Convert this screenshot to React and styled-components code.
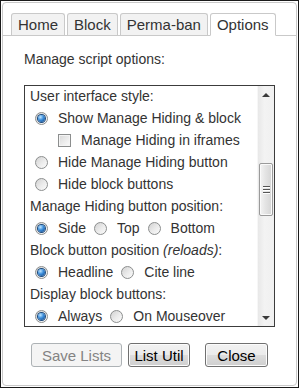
import React from 'react'
import styled, { createGlobalStyle } from 'styled-components'

const GlobalStyle = createGlobalStyle`
  html, body {
    margin: 0;
    padding: 0;
    background: #fff;
  }
  body {
    font-family: "Liberation Sans", Arial, sans-serif;
    font-size: 14px;
    color: #333;
  }
  * {
    box-sizing: border-box;
  }
`

const Frame = styled.div`
  width: 299px;
  height: 388px;
  border: 1px solid #1a1a1a;
  padding: 1px;
  background: #fff;
`

const Panel = styled.div`
  height: 100%;
  border: 1px solid #c9c9c9;
  border-radius: 4px;
  display: flex;
  flex-direction: column;
`

const TabBar = styled.ul`
  list-style: none;
  margin: 0;
  padding: 10px 8px 0;
  display: flex;
  align-items: flex-end;
  gap: 2px;
  border-bottom: 1px solid #c9c9c9;
`

const Tab = styled.li`
  height: ${({ $active }) => ($active ? '23px' : '22px')};
  margin-bottom: ${({ $active }) => ($active ? '-1px' : '0')};
  line-height: 21px;
  padding: 0 6px;
  font-size: 15px;
  border: 1px solid #c9c9c9;
  border-bottom: ${({ $active }) => ($active ? '1px solid #fff' : 'none')};
  border-radius: 3px 3px 0 0;
  background: ${({ $active }) => ($active ? '#fff' : '#f2f2f2')};
  color: #333;
  cursor: pointer;
`

const Body = styled.div`
  padding: 15px 21px 0;
  display: flex;
  flex-direction: column;
`

const Intro = styled.p`
  margin: 0 0 17px;
  line-height: 17px;
`

const ScrollBox = styled.div`
  width: 251px;
  height: 242px;
  border: 1px solid #3c3c3c;
  display: flex;
`

const ScrollContent = styled.div`
  flex: 1;
  overflow: hidden;
  padding: 0 0 0 5px;

  /* list is scrolled a pixel down */
  & > :first-child {
    margin-top: -1px;
  }
`

const Heading = styled.div`
  line-height: 22px;
  white-space: nowrap;
  em {
    font-style: italic;
  }
`

const Row = styled.div`
  display: flex;
  align-items: center;
  height: 22px;
  padding-left: ${({ $indent }) => $indent || 5}px;
  white-space: nowrap;
`

const Choice = styled.label`
  display: inline-flex;
  align-items: center;
  margin-right: ${({ $gap }) => $gap || 0}px;
`

const RadioDot = styled.span`
  width: 13px;
  height: 13px;
  border-radius: 50%;
  border: 1px solid #8c8e8e;
  background: linear-gradient(135deg, #d2d2d2 0%, #ececec 55%, #fbfbfb 100%);
  margin-right: 10px;
  display: flex;
  align-items: center;
  justify-content: center;
  flex-shrink: 0;

  &::after {
    content: '';
    display: ${({ $checked }) => ($checked ? 'block' : 'none')};
    width: 7px;
    height: 7px;
    border-radius: 50%;
    background: radial-gradient(circle at 35% 30%, #bfe6ff 0%, #3b8ddb 45%, #0f3f7a 100%);
    box-shadow: 0 0 0 1px #1b4a7d;
  }
`

const CheckBox = styled.span`
  width: 13px;
  height: 13px;
  border: 1px solid #8c8e8e;
  box-shadow: inset 0 0 0 1px #f4f4f4;
  background: linear-gradient(135deg, #d8d8d8 0%, #eeeeee 60%, #fafafa 100%);
  margin-right: 10px;
  flex-shrink: 0;
`

const ScrollBar = styled.div`
  width: 17px;
  display: flex;
  flex-direction: column;
  background: linear-gradient(90deg, #e8e8e8 0%, #f3f3f3 40%, #f0f0f0 100%);
  border-left: 1px solid #f7f7f7;
`

const ArrowButton = styled.div`
  height: 17px;
  display: flex;
  align-items: center;
  justify-content: center;
  flex-shrink: 0;

  &::after {
    content: '';
    border-left: 4px solid transparent;
    border-right: 4px solid transparent;
    ${({ $down }) =>
      $down ? 'border-top: 4px solid #3a3a3a;' : 'border-bottom: 4px solid #3a3a3a;'}
  }
`

const Track = styled.div`
  flex: 1;
  padding-top: 60px;
`

const Thumb = styled.div`
  height: 53px;
  margin: 0 1px;
  border: 1px solid #9a9a9a;
  border-radius: 2px;
  background: linear-gradient(90deg, #f4f4f4 0%, #e4e4e4 45%, #d5d5d5 100%);
  box-shadow: inset 0 0 0 1px #fafafa;
  display: flex;
  flex-direction: column;
  align-items: center;
  justify-content: center;
  gap: 2px;
`

const Grip = styled.span`
  width: 7px;
  height: 1px;
  background: #555;
  box-shadow: 0 1px 0 #fff;
`

const ButtonRow = styled.div`
  margin-top: 16px;
  display: flex;
  justify-content: center;
  gap: 6px;
`

const Button = styled.button`
  width: ${({ $w }) => $w}px;
  height: 24px;
  margin-left: ${({ $push }) => $push || 0}px;
  padding: 0;
  font-family: "Liberation Sans", Arial, sans-serif;
  font-size: 15px;
  color: #000;
  border: 1px solid #707070;
  border-radius: 3px;
  background: linear-gradient(#f2f2f2 0%, #ebebeb 50%, #dddddd 50%, #cfcfcf 100%);
  box-shadow: inset 0 0 0 1px #fcfcfc;

  &:disabled {
    color: #838383;
    border-color: #adb2b5;
    background: #f4f4f4;
    box-shadow: none;
  }
`

function Radio({ checked, label, gap }) {
  return (
    <Choice $gap={gap}>
      <RadioDot $checked={checked} />
      {label}
    </Choice>
  )
}

export default function App() {
  const tabs = ['Home', 'Block', 'Perma-ban', 'Options']

  return (
    <>
      <GlobalStyle />
      <Frame>
        <Panel>
          <TabBar>
            {tabs.map((t) => (
              <Tab key={t} $active={t === 'Options'}>
                {t}
              </Tab>
            ))}
          </TabBar>

          <Body>
            <Intro>Manage script options:</Intro>

            <ScrollBox>
              <ScrollContent>
                <Heading>User interface style:</Heading>
                <Row $indent={5}>
                  <Radio checked label="Show Manage Hiding & block" />
                </Row>
                <Row $indent={28}>
                  <Choice>
                    <CheckBox />
                    Manage Hiding in iframes
                  </Choice>
                </Row>
                <Row>
                  <Radio label="Hide Manage Hiding button" />
                </Row>
                <Row>
                  <Radio label="Hide block buttons" />
                </Row>

                <Heading>Manage Hiding button position:</Heading>
                <Row>
                  <Radio checked label="Side" gap={8} />
                  <Radio label="Top" gap={8} />
                  <Radio label="Bottom" />
                </Row>

                <Heading>
                  Block button position <em>(reloads)</em>:
                </Heading>
                <Row>
                  <Radio checked label="Headline" gap={8} />
                  <Radio label="Cite line" />
                </Row>

                <Heading>Display block buttons:</Heading>
                <Row>
                  <Radio checked label="Always" gap={8} />
                  <Radio label="On Mouseover" />
                </Row>
              </ScrollContent>

              <ScrollBar>
                <ArrowButton />
                <Track>
                  <Thumb>
                    <Grip />
                    <Grip />
                    <Grip />
                  </Thumb>
                </Track>
                <ArrowButton $down />
              </ScrollBar>
            </ScrollBox>

            <ButtonRow>
              <Button $w={91} disabled>
                Save Lists
              </Button>
              <Button $w={62}>List Util</Button>
              <Button $w={63} $push={9}>
                Close
              </Button>
            </ButtonRow>
          </Body>
        </Panel>
      </Frame>
    </>
  )
}
